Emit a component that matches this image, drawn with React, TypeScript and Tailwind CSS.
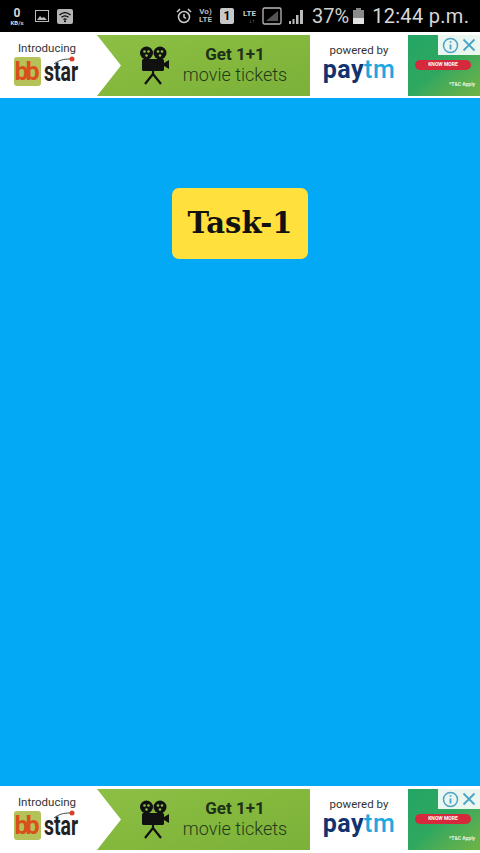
const sans = { fontFamily: 'Roboto, sans-serif' }

function AdBanner() {
  return (
    <div className="flex h-[61px] bg-white" style={sans}>
      {/* bbstar */}
      <div className="w-[97px] flex flex-col items-center shrink-0 pt-[7px]">
        <div className="text-[11.5px] leading-[13px] text-[#333] pr-[3px]">Introducing</div>
        <div className="flex items-center mt-[2px] pr-[7px]">
          <div className="w-[27px] h-[29px] rounded-[3px] bg-[#b5c25a] flex items-center justify-center text-[25px] leading-none font-bold text-[#d9501a] tracking-[-3px] pr-[3px]">
            bb
          </div>
          <div className="relative ml-[3px] h-[29px] flex items-end">
            <span className="text-[27px] leading-[27px] font-bold text-[#222] inline-block w-[33px] origin-left scale-x-[0.72]">star</span>
            <svg className="absolute right-[0px] top-[-1px]" width="24" height="9" viewBox="0 0 24 9">
              <path d="M1 8C6 4 11 3 17 3" stroke="#444" strokeWidth="1" fill="none" />
              <circle cx="19" cy="3" r="2.5" fill="#d9402a" />
            </svg>
          </div>
        </div>
      </div>

      {/* green offer */}
      <div className="w-[213px] shrink-0 flex items-center bg-gradient-to-br from-[#8dbf45] via-[#84b83d] to-[#7bb03a] [clip-path:polygon(0_0,100%_0,100%_100%,0_100%,24px_50%)] pl-[41px]">
        <svg className="shrink-0" width="32" height="39" viewBox="0 0 30 39">
          <circle cx="7.5" cy="7" r="6.5" fill="#111" />
          <circle cx="21" cy="7" r="6.5" fill="#111" />
          <circle cx="5.5" cy="5.5" r="1.3" fill="#8dbf45" />
          <circle cx="9.5" cy="5.5" r="1.3" fill="#8dbf45" />
          <circle cx="7.5" cy="9.5" r="1.3" fill="#8dbf45" />
          <circle cx="19" cy="5.5" r="1.3" fill="#8dbf45" />
          <circle cx="23" cy="5.5" r="1.3" fill="#8dbf45" />
          <circle cx="21" cy="9.5" r="1.3" fill="#8dbf45" />
          <rect x="3" y="13" width="22" height="12" rx="1.5" fill="#111" />
          <path d="M25 17l5-3v9l-5-3z" fill="#111" />
          <path d="M14 25v4M14 28L6 38M14 28l8 10" stroke="#111" strokeWidth="2.2" fill="none" />
        </svg>
        <div className="ml-[11px] w-[108px] text-center text-[#1d3018] whitespace-nowrap">
          <div className="text-[17px] leading-[20px] font-bold -mt-[2px]">Get 1+1</div>
          <div className="text-[18px] leading-[20px] mt-[1px] font-light text-[#1f3a18]">movie tickets</div>
        </div>
      </div>

      {/* paytm */}
      <div className="w-[98px] shrink-0 flex flex-col items-center pt-[8px]">
        <div className="text-[11.5px] leading-[14px] text-[#333]">powered by</div>
        <div className="text-[25px] leading-[26px] font-bold tracking-[0.5px]">
          <span className="text-[#12336f]">pay</span>
          <span className="text-[#1fa8e0] font-medium">tm</span>
        </div>
      </div>

      {/* know more */}
      <div className="relative flex-1 overflow-hidden bg-gradient-to-br from-[#22a565] via-[#2fa85f] to-[#6fb344] pt-[25px]">
        <div className="w-[56px] h-[10px] ml-[7px] rounded-full bg-[#d42a3c] flex items-center justify-center text-[5px] font-bold text-white">
          KNOW MORE
        </div>
        <div className="mt-[11px] mr-[5px] text-right text-[5px] font-bold text-[#e6f5e0]">*T&amp;C Apply</div>
        <div className="absolute top-0 right-0 w-[42px] h-[20px] bg-white/90 flex items-center justify-center gap-[3px]">
          <svg width="17" height="17" viewBox="0 0 17 17" fill="none" stroke="#4aa3c9" strokeWidth="1.5">
            <circle cx="8.5" cy="8.5" r="7" />
            <path d="M8.5 7.5v5M8.5 4.2v1.6" strokeWidth="1.8" />
          </svg>
          <svg width="14" height="14" viewBox="0 0 14 14" stroke="#4aa3c9" strokeWidth="1.8">
            <path d="M1.5 1.5l11 11M12.5 1.5l-11 11" />
          </svg>
        </div>
      </div>
    </div>
  )
}

function StatusBar() {
  return (
    <div className="h-[32px] bg-black flex items-center text-[#d8d8d8]" style={sans}>
      <div className="w-[26px] ml-[4px] flex flex-col items-center">
        <span className="text-[12px] leading-[12px] font-bold">0</span>
        <span className="text-[6px] leading-[7px] font-bold">KB/s</span>
      </div>
      <svg className="ml-[5px]" width="14" height="12" viewBox="0 0 14 12">
        <rect x="0.5" y="0.5" width="13" height="11" fill="none" stroke="#bbb" />
        <path d="M2 10l3-4 2 2 2-1 3 3z" fill="#bbb" />
      </svg>
      <svg className="ml-[8px]" width="16" height="15" viewBox="0 0 16 15">
        <rect width="16" height="15" rx="2" fill="#b5b5b5" />
        <path d="M2.5 6C6 3 10 3 13.5 6M4.5 8.3c2.300-1.800 4.700-1.800 7 0M6.500 10.500c1-.8 2-.8 3 0" stroke="#000" strokeWidth="1.200" fill="none" />
        <circle cx="8" cy="12.300" r="1" fill="#000" />
      </svg>

      <svg className="ml-[103px]" width="16" height="16" viewBox="0 0 16 16" fill="none" stroke="#ccc" strokeWidth="1.500">
        <circle cx="8" cy="9" r="5.500" />
        <path d="M8 6v3l2 1.500M1 4l3-3M15 4l-3-3" />
      </svg>
      <div className="ml-[5px] w-[17px] text-[8px] leading-[8px] font-bold text-center text-[#bbb]">
        <div>Vo)</div>
        <div>LTE</div>
      </div>
      <div className="ml-[6px] w-[14px] h-[16px] bg-[#c8c8c8] rounded-[2px] text-black text-[12px] leading-[16px] font-bold text-center">1</div>
      <div className="ml-[9px] w-[18px] text-[8px] leading-[8px] font-bold text-[#ccc]">
        <div>LTE</div>
        <div className="text-center text-[6px] leading-[5px] text-[#888]">↓↑</div>
      </div>
      <svg className="ml-[1px]" width="20" height="18" viewBox="0 0 20 18">
        <rect x="1" y="1" width="18" height="16" rx="1.500" fill="none" stroke="#bbb" strokeWidth="1.300" />
        <path d="M4 14L16 4v10z" fill="#555" />
      </svg>
      <svg className="ml-[7px]" width="15" height="15" viewBox="0 0 15 15" fill="#bbb">
        <rect x="0" y="12" width="2" height="3" />
        <rect x="3.500" y="10" width="2" height="5" />
        <rect x="7" y="6" width="2.500" height="9" />
        <rect x="11" y="1" width="3" height="14" />
      </svg>
      <span className="ml-[8px] text-[20px] leading-none text-[#d0d0d0]">37%</span>
      <svg className="ml-[4px]" width="11" height="16" viewBox="0 0 11 16">
        <rect x="3" y="0" width="5" height="2" fill="#888" />
        <rect x="0" y="2" width="11" height="8" fill="#8a8a8a" />
        <rect x="0" y="10" width="11" height="6" fill="#e2e2e2" />
      </svg>
      <span className="ml-[8px] text-[20px] leading-none text-[#d8d8d8] tracking-[0.3px] whitespace-nowrap">12:44 p.m.</span>
    </div>
  )
}

export default function App() {
  return (
    <div className="w-[480px] h-[853px] flex flex-col bg-white overflow-hidden">
      <StatusBar />
      <div className="pt-[3px] pb-[2px]">
        <AdBanner />
      </div>
      <div className="flex-1 bg-[#03a9f4] flex justify-center items-start pt-[90px]">
        <button className="w-[136px] h-[71px] rounded-[7px] bg-[#ffe03c] text-[#111] text-[29px] font-bold" style={{ fontFamily: '"DejaVu Serif", serif' }}>
          Task-1
        </button>
      </div>
      <div className="pt-[3px] pb-[3px]">
        <AdBanner />
      </div>
    </div>
  )
}
